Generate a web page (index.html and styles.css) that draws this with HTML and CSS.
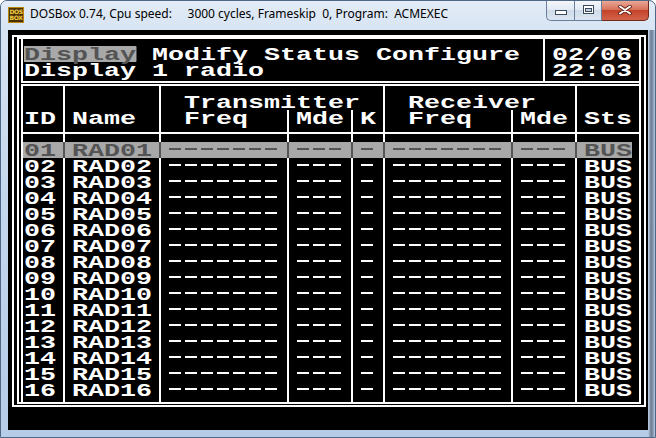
FILE: index.html
```html
<!DOCTYPE html>
<html lang="en">
<head>
    <meta charset="UTF-8">
    <title>DOSBox 0.74 - ACMEXEC</title>
    <link rel="stylesheet" href="styles.css">
</head>
<body>
    <div class="window">
        <div class="titlebar">
            <div class="app-icon"><span>DOS</span><span>BOX</span></div>
            <div class="title">DOSBox 0.74, Cpu speed:     3000 cycles, Frameskip  0, Program:  ACMEXEC</div>
            <div class="caption">
                <div class="cbtn min">
                    <svg width="12" height="5" viewBox="0 0 12 5"><rect x="0.5" y="0.5" width="11" height="4" fill="#fff" stroke="#3c4a5e"/></svg>
                </div>
                <div class="cbtn max">
                    <svg width="11" height="9" viewBox="0 0 11 9"><rect x="0.5" y="0.5" width="10" height="8" fill="#fff" stroke="#3c4a5e"/><rect x="2.5" y="3.5" width="6" height="3" fill="#c3cfdf" stroke="#3c4a5e"/></svg>
                </div>
                <div class="cbtn close">
                    <svg width="14" height="10" viewBox="0 0 14 10"><path d="M2 1.5 L12 8.5 M12 1.5 L2 8.5" stroke="#5b1f12" stroke-width="3.6" stroke-linecap="round"/><path d="M2 1.5 L12 8.5 M12 1.5 L2 8.5" stroke="#fff" stroke-width="2" stroke-linecap="round"/></svg>
                </div>
            </div>
        </div>

        <div class="client">
            <div class="frame-outer">
                <div class="frame-inner">
                    <div class="menu-box">
                        <div class="menu">
                            <div><span class="t"><span class="hi">Display</span> Modify Status Configure</span></div>
                            <div><span class="t">Display 1 radio</span></div>
                        </div>
                        <div class="clock">
                            <div><span class="t">02/06</span></div>
                            <div><span class="t">22:03</span></div>
                        </div>
                    </div>

                    <div class="table-box">
                        <div class="thead">
                            <div class="h-id"><span class="t">ID</span></div>
                            <div class="h-name"><span class="t">Name</span></div>
                            <div class="h-tx"><span class="t">Transmitter</span></div>
                            <div class="h-rx"><span class="t">Receiver</span></div>
                            <div class="h-sts"><span class="t">Sts</span></div>
                            <div class="h-sub wide"><span class="t">Freq</span></div>
                            <div class="h-sub"><span class="t">Mde</span></div>
                            <div class="h-sub"><span class="t">K</span></div>
                            <div class="h-sub wide"><span class="t">Freq</span></div>
                            <div class="h-sub"><span class="t">Mde</span></div>
                        </div>
                        <div class="tbody" id="rows"></div>
                    </div>
                </div>
            </div>
        </div>
    </div>

    <script>
        // build the radio list (16 entries, first one selected)
        const rows = document.getElementById('rows');
        const COLS = 8;

        function spacer(cls) {
            let row = document.createElement('div');
            row.className = 'row ' + cls;
            for (let i = 0; i < COLS; i++) {
                row.appendChild(document.createElement('div'));
            }
            rows.appendChild(row);
        }

        function dash(n) {
            return '<div><i class="dash d' + n + '"></i></div>';
        }

        spacer('pad-top');
        for (let i = 1; i <= 16; i++) {
            let id = String(i).padStart(2, '0');
            let row = document.createElement('div');
            row.className = i === 1 ? 'row sel' : 'row';
            row.innerHTML =
                '<div><span class="t">' + id + '</span></div>' +
                '<div><span class="t">RAD' + id + '</span></div>' +
                dash(7) + dash(3) + dash(1) + dash(7) + dash(3) +
                '<div><span class="t">BUS</span></div>';
            rows.appendChild(row);
        }
        spacer('pad-bottom');
    </script>
</body>
</html>
```

FILE: styles.css
```css
* {
    box-sizing: border-box;
}

body {
    margin: 0;
    width: 656px;
    height: 438px;
    overflow: hidden;
    background: #ffffff;
}

/* Windows 7 style frame */
.window {
    width: 656px;
    height: 438px;
    border: 1px solid #4f6885;
    border-radius: 7px 7px 0 0;
    background:
        linear-gradient(to right, transparent 647px, #a9bad0 648px, #6b7c93 650px, #8596ad 652px, #b9cbe2 654px),
        linear-gradient(to bottom, #e3ecf7 0, #d7e4f3 29px, #c4d7ed 200px, #b6cce7 100%);
}

.titlebar {
    height: 29px;
    display: flex;
    align-items: flex-start;
    background: linear-gradient(to bottom, #e3ecf7 0, #d7e4f3 100%);
    border-radius: 6px 6px 0 0;
}

.app-icon {
    width: 16px;
    height: 16px;
    margin: 6px 0 0 7px;
    background: #4a2f05;
    border: 1px solid #b8860b;
    color: #f5d142;
    font: bold 6px/6px "DejaVu Sans", sans-serif;
    letter-spacing: -0.4px;
    display: flex;
    flex-direction: column;
    align-items: center;
    justify-content: center;
}

.title {
    margin: 5px 0 0 6px;
    font: 12px/16px "Noto Sans", "Open Sans", sans-serif;
    color: #000;
    white-space: pre;
}

.caption {
    margin-left: auto;
    margin-right: 6px;
    display: flex;
    height: 20px;
}

.cbtn {
    height: 20px;
    display: flex;
    align-items: center;
    justify-content: center;
    border: 1px solid #6a7f9b;
    border-top: none;
    background: linear-gradient(to bottom, #f4f7fb 0, #e2eaf4 45%, #cfdbe9 50%, #dce6f2 100%);
}

.cbtn.min {
    width: 28px;
    border-right: none;
    border-radius: 0 0 0 5px;
    align-items: flex-end;
    padding-bottom: 5px;
}

.cbtn.max {
    width: 28px;
    padding-bottom: 3px;
}

.cbtn.close {
    width: 47px;
    border-left: none;
    border-color: #6f2a1b;
    border-radius: 0 0 5px 0;
    background: linear-gradient(to bottom, #e9a897 0, #d8735b 45%, #c4442a 50%, #d2624a 100%);
    padding-bottom: 2px;
}

/* DOS screen, 40 x 25 text mode with 16px cells */
.client {
    width: 640px;
    height: 400px;
    margin-left: 7px;
    padding: 5px 0 0 4px;
    background: #000;
    color: #fff;
    font: bold 19px/16px "Liberation Mono", "Courier New", monospace;
}

.t {
    display: inline-block;
    vertical-align: top;
    white-space: pre;
    transform: translateY(1px) scaleX(1.4035);
    transform-origin: 0 0;
}

.hi {
    display: inline-block;
    vertical-align: top;
    height: 15px;
    background: #a8a8a8;
    color: #545454;
    box-shadow: 0 -1px 0 #a8a8a8;
}

.frame-outer {
    width: 634px;
    border: 2px solid #fff;
    padding: 0 3px 1px;
}

.frame-inner {
    border: 2px solid #fff;
    padding-left: 2px;
}

.menu-box {
    display: flex;
    border-left: 2px solid #fff;
    border-bottom: 2px solid #fff;
    margin-bottom: 1px;
}

.menu {
    width: 520px;
    padding: 7px 0 3px 1px;
}

.clock {
    flex: 1;
    border-left: 2px solid #fff;
    padding: 7px 0 3px 7px;
}

.table-box {
    border-left: 2px solid #fff;
    border-top: 2px solid #fff;
}

.thead,
.row {
    display: grid;
    grid-template-columns: 40px 96px 128px 64px 32px 128px 64px 57px;
}

.thead {
    grid-template-rows: 24px 22px;
    border-bottom: 2px solid #fff;
}

.thead > div {
    border-left: 2px solid;
    padding-left: 7px;
}

.thead .h-id {
    grid-column: 1;
    grid-row: 1 / 3;
    border-left: none;
    padding: 24px 0 0 1px;
}

.thead .h-name {
    grid-column: 2;
    grid-row: 1 / 3;
    padding-top: 24px;
}

.thead .h-tx {
    grid-column: 3 / 6;
    grid-row: 1;
    padding: 8px 0 0 23px;
}

.thead .h-rx {
    grid-column: 6 / 8;
    grid-row: 1;
    padding: 8px 0 0 23px;
}

.thead .h-sts {
    grid-column: 8;
    grid-row: 1 / 3;
    padding-top: 24px;
}

.thead .h-sub {
    grid-row: 2;
}

.thead .h-sub.wide {
    padding-left: 23px;
}

.row {
    width: 609px;
    height: 16px;
}

.row > div {
    border-left: 2px solid;
    padding-left: 7px;
}

.row > div:first-child {
    border-left: none;
    padding-left: 1px;
}

.row.pad-top {
    height: 8px;
}

.row.pad-bottom {
    height: 4px;
}

.row.sel {
    background: #a8a8a8;
    color: #545454;
}

.dash {
    display: block;
    height: 2px;
    margin-top: 6px;
    background: repeating-linear-gradient(90deg, transparent 0 1px, currentColor 1px 13px, transparent 13px 16px);
}

.d1 { width: 16px; }
.d3 { width: 48px; }
.d7 { width: 112px; }
```
